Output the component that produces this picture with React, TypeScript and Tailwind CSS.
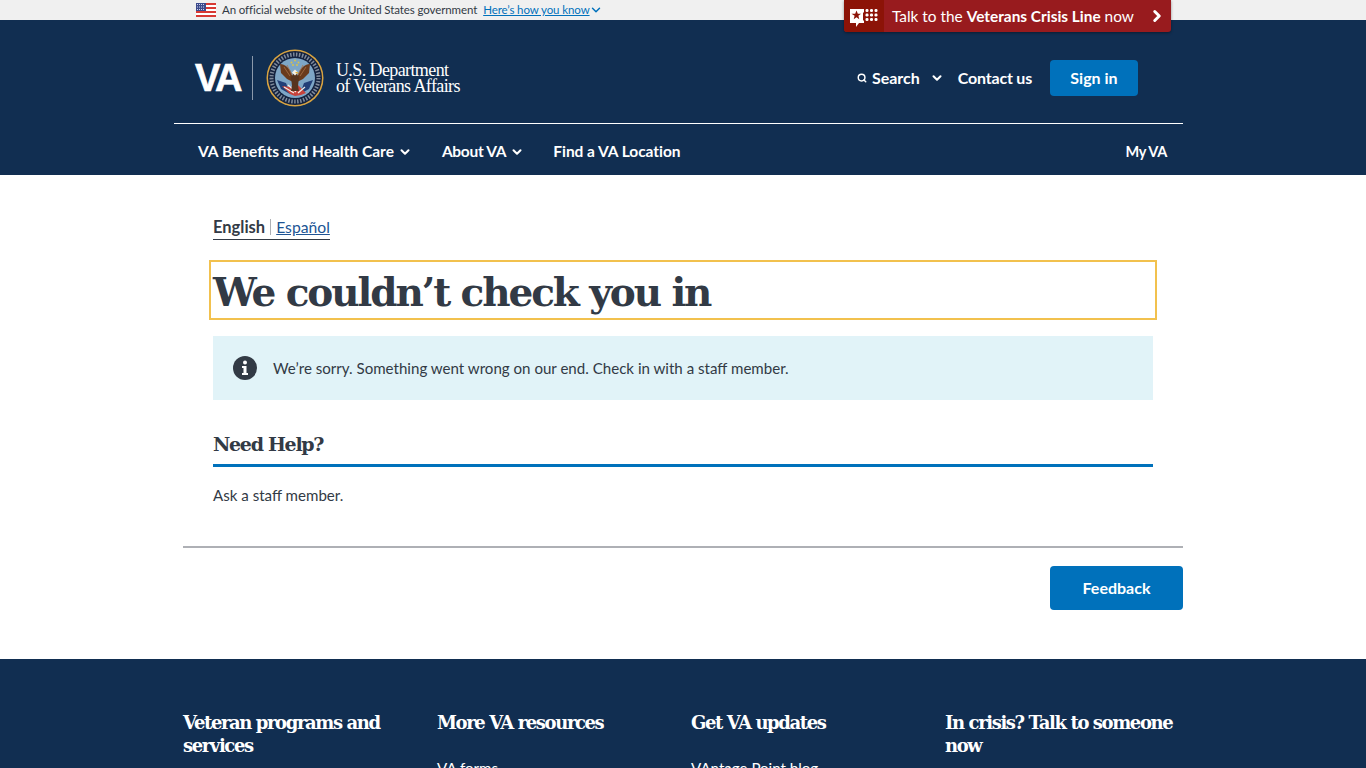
import { ChevronDown, ChevronRight, Search } from "lucide-react";

const sans = "font-['Lato','Noto_Sans',sans-serif]";
const slab = "font-['DejaVu_Serif',serif]";

function UsFlag() {
  return (
    <svg width="20" height="14" viewBox="0 0 20 14" className="shrink-0">
      <rect width="20" height="14" fill="#fff" />
      <rect y="0" width="20" height="2" fill="#d83933" />
      <rect y="4" width="20" height="2" fill="#d83933" />
      <rect y="8" width="20" height="2" fill="#d83933" />
      <rect y="12" width="20" height="2" fill="#d83933" />
      <rect width="10" height="8" fill="#3c4a8c" />
      <path d="M1 1.500h8M1 4h8M1 6.500h8" stroke="#cfd4ea" strokeWidth="1" strokeDasharray="1 1" />
    </svg>
  );
}

function CrisisIcon() {
  return (
    <svg width="29" height="22" viewBox="0 0 29 22">
      <path d="M0 2h14v3.500h-1v8h1V16H9l-3 4v-4H0z" fill="#fff" />
      <path d="M6.500 3.500l1.300 3.200h3.200l-2.600 2.100.9 3.400-2.800-1.900-2.800 1.900.9-3.400L1.500 6.700h3.700z" fill="#8c1307" />
      <g fill="#fff">
        <rect x="15.500" y="2" width="3" height="3" rx="1.200" />
        <rect x="20" y="2" width="3" height="3" rx="1.200" />
        <rect x="24.500" y="2" width="3" height="3" rx="1.200" />
        <rect x="15.500" y="6.500" width="3" height="3" rx="1.200" />
        <rect x="20" y="6.500" width="3" height="3" rx="1.200" />
        <rect x="24.500" y="6.500" width="3" height="3" rx="1.200" />
        <rect x="15.500" y="11" width="3" height="3" rx="1.200" />
        <rect x="20" y="11" width="3" height="3" rx="1.200" />
        <rect x="24.500" y="11" width="3" height="3" rx="1.200" />
      </g>
    </svg>
  );
}

function VaSeal() {
  return (
    <svg width="58" height="58" viewBox="0 0 58 58" className="shrink-0">
      <circle cx="29" cy="29" r="28.500" fill="#d9a441" />
      <circle cx="29" cy="29" r="27" fill="#14223f" />
      <circle cx="29" cy="29" r="23.500" fill="none" stroke="#a3adbb" strokeWidth="4" strokeDasharray="1.500 1.500" opacity="0.75" />
      <circle cx="29" cy="29" r="20" fill="#7ea6c6" />
      <path d="M11 31l9 3 4 11-9-5z" fill="#223f78" />
      <path d="M47 31l-9 3-4 11 9-5z" fill="#223f78" />
      <path d="M16 37l8 8 5 2 6-1 5-2-3-3-6-6-6 3z" fill="#c8423b" />
      <path d="M18 38l10 6M22 36l8 7M39 38l-7 6" stroke="#f2eee6" strokeWidth="1.200" />
      <path d="M14 15c5 0 10 4 12 11l1 7-6-3-6-6z" fill="#6a3a1c" />
      <path d="M44 15c-5 0-10 4-12 11l-1 7 6-3 6-6z" fill="#6a3a1c" />
      <path d="M18 18l6 9M21 16l5 10M40 18l-6 9M37 16l-5 10" stroke="#a9744a" strokeWidth="0.800" />
      <path d="M25 28l4-5 4 5-1 9 1 5h-8l1-5z" fill="#57341e" />
      <path d="M26 23.500l3-3 3 3-3 3z" fill="#f4f1e8" />
      <path d="M29 23h3.500l-1.500 2z" fill="#e3b23c" />
      <g fill="#d9c24a">
        <circle cx="29" cy="11.500" r="1" />
        <circle cx="25.500" cy="13.500" r="1" />
        <circle cx="32.500" cy="13.500" r="1" />
        <circle cx="27" cy="16" r="1" />
        <circle cx="31" cy="16" r="1" />
      </g>
    </svg>
  );
}

function FooterCol({ title, links, gap }: { title: string; links: string[]; gap: string }) {
  return (
    <div className="w-[254px] shrink-0 pr-[10px]">
      <h2 className={`${slab} text-[18px] leading-[23px] font-bold tracking-[-1.400px] text-white`}>{title}</h2>
      <ul className={`${gap} space-y-3 text-[15.1px] leading-5 text-white`}>
        {links.map((l) => (
          <li key={l}>{l}</li>
        ))}
      </ul>
    </div>
  );
}

export default function App() {
  return (
    <div className={`${sans} relative h-screen overflow-hidden bg-white text-[#323a45]`}>
      {/* Crisis line */}
      <div className="absolute left-[844px] top-0 z-10 flex h-[32px] w-[327px] items-center rounded-b-[3px] bg-[#981b1e] text-white shadow-[0_1px_3px_rgba(0,0,0,0.4)]">
        <div className="flex h-full w-[40px] items-center justify-center rounded-bl-[3px] bg-[#8c1307] pt-[4px] pl-[1px]">
          <CrisisIcon />
        </div>
        <span className="ml-[8px] flex-1 text-[15.400px] leading-[20px]">
          Talk to the <b className="font-bold">Veterans Crisis Line</b> now
        </span>
        <ChevronRight size={18} strokeWidth={4} className="mr-[5px]" />
      </div>

      {/* Gov banner */}
      <div className="flex h-[20px] items-center bg-[#f0f0f0] pl-[196px] text-[11.5px] tracking-[-0.1px]">
        <UsFlag />
        <span className="ml-[6px]">An official website of the United States government</span>
        <span className="ml-[6px] text-[#0071bb] underline">Here’s how you know</span>
        <ChevronDown size={14} strokeWidth={2.500} className="-ml-[1px] text-[#0071bb]" />
      </div>

      {/* Header */}
      <header className="h-[155px] bg-[#112e51] text-white">
        <div className="ml-[174px] w-[1009px]">
          <div className="flex h-[104px] items-center border-b border-white pt-[12px] pl-[21px]">
            <span className="font-['Liberation_Sans',sans-serif] text-[38px] leading-none font-bold tracking-[-2.500px] [-webkit-text-stroke:0.7px_white]">VA</span>
            <span className="mr-[13px] ml-[12px] h-[44px] w-px bg-[#8b99ab]" />
            <VaSeal />
            <div className="ml-[12px] font-['Liberation_Serif',serif] text-[18px] leading-[16px] tracking-[-0.600px]">
              <div>U.S. Department</div>
              <div>of Veterans Affairs</div>
            </div>
            <div className="mr-[45px] ml-auto flex items-center text-[16px] font-bold">
              <Search size={10} strokeWidth={3.500} className="mr-[5px]" />
              <span>Search</span>
              <ChevronDown size={14} strokeWidth={3.500} className="ml-[10px]" />
              <span className="ml-[14px] tracking-[-0.200px]">Contact us</span>
              <span className="ml-[18px] flex h-[36px] w-[88px] items-center justify-center rounded-[4px] bg-[#0071bb]">Sign in</span>
            </div>
          </div>
          <nav className="flex h-[51px] items-center pt-[4px] pr-[16px] pl-[24px] text-[15.5px] font-bold">
            <span>VA Benefits and Health Care</span>
            <ChevronDown size={14} strokeWidth={3.500} className="ml-[4px]" />
            <span className="ml-[30px] tracking-[-0.300px]">About VA</span>
            <ChevronDown size={14} strokeWidth={3.500} className="ml-[4px]" />
            <span className="ml-[29px] tracking-[-0.050px]">Find a VA Location</span>
            <span className="ml-auto text-[14.500px] tracking-[-0.300px]">My VA</span>
          </nav>
        </div>
      </header>

      {/* Main */}
      <main className="mx-auto w-[1000px] pt-[41px]">
        <div className="px-[30px]">
          <div className="flex w-fit items-center border-b border-[#323a45] pb-[1px] text-[16px] leading-[22px]">
            <span className="text-[16.500px] font-bold">English</span>
            <span className="mr-[5px] ml-[5px] h-[16px] w-px bg-[#aeb0b5]" />
            <span className="text-[15.700px] text-[#205493] underline">Español</span>
          </div>

          <div className="-mx-[4px] mt-[20px] flex h-[60px] items-center border-2 border-[#f2c14e] pt-[4px] pl-[2px]">
            <h1 className={`${slab} text-[39px] leading-none font-bold tracking-[-2.100px]`}>We couldn’t check you in</h1>
          </div>

          <div className="mt-[16px] flex h-[64px] items-center bg-[#e1f3f8] pl-[20px] text-[15.100px]">
            <svg width="24" height="24" viewBox="0 0 24 24" className="shrink-0">
              <circle cx="12" cy="12" r="12" fill="#323a45" />
              <circle cx="12" cy="6.500" r="2" fill="#fff" />
              <path d="M9 10h4.500v7H15v2H9v-2h1.500v-5H9z" fill="#fff" />
            </svg>
            <span className="ml-[16px]">We’re sorry. Something went wrong on our end. Check in with a staff member.</span>
          </div>

          <h2 className={`${slab} mt-[31px] border-b-[3px] border-[#0071bb] pb-[7px] text-[19px] leading-[26px] font-bold tracking-[-1.300px]`}>Need Help?</h2>
          <p className="mt-[18px] text-[15.100px] leading-[20px]">Ask a staff member.</p>
        </div>

        <hr className="mt-[41px] border-t-2 border-[#aeb0b5]" />
        <div className="mt-[18px] flex justify-end">
          <span className="flex h-[44px] w-[133px] items-center justify-center rounded-[4px] bg-[#0071bb] text-[16px] font-bold text-white">Feedback</span>
        </div>
      </main>

      {/* Footer */}
      <footer className="mt-[49px] bg-[#112e51] pt-[52px] pb-[40px]">
        <div className="mx-auto flex w-[1000px]">
          <FooterCol title="Veteran programs and services" gap="mt-[20px]" links={["Homeless Veterans", "Women Veterans"]} />
          <FooterCol title="More VA resources" gap="mt-[24px]" links={["VA forms", "VA health care"]} />
          <FooterCol title="Get VA updates" gap="mt-[24px]" links={["VAntage Point blog", "Email updates"]} />
          <FooterCol title="In crisis? Talk to someone now" gap="mt-[20px]" links={["Veterans Crisis Line"]} />
        </div>
      </footer>
    </div>
  );
}
